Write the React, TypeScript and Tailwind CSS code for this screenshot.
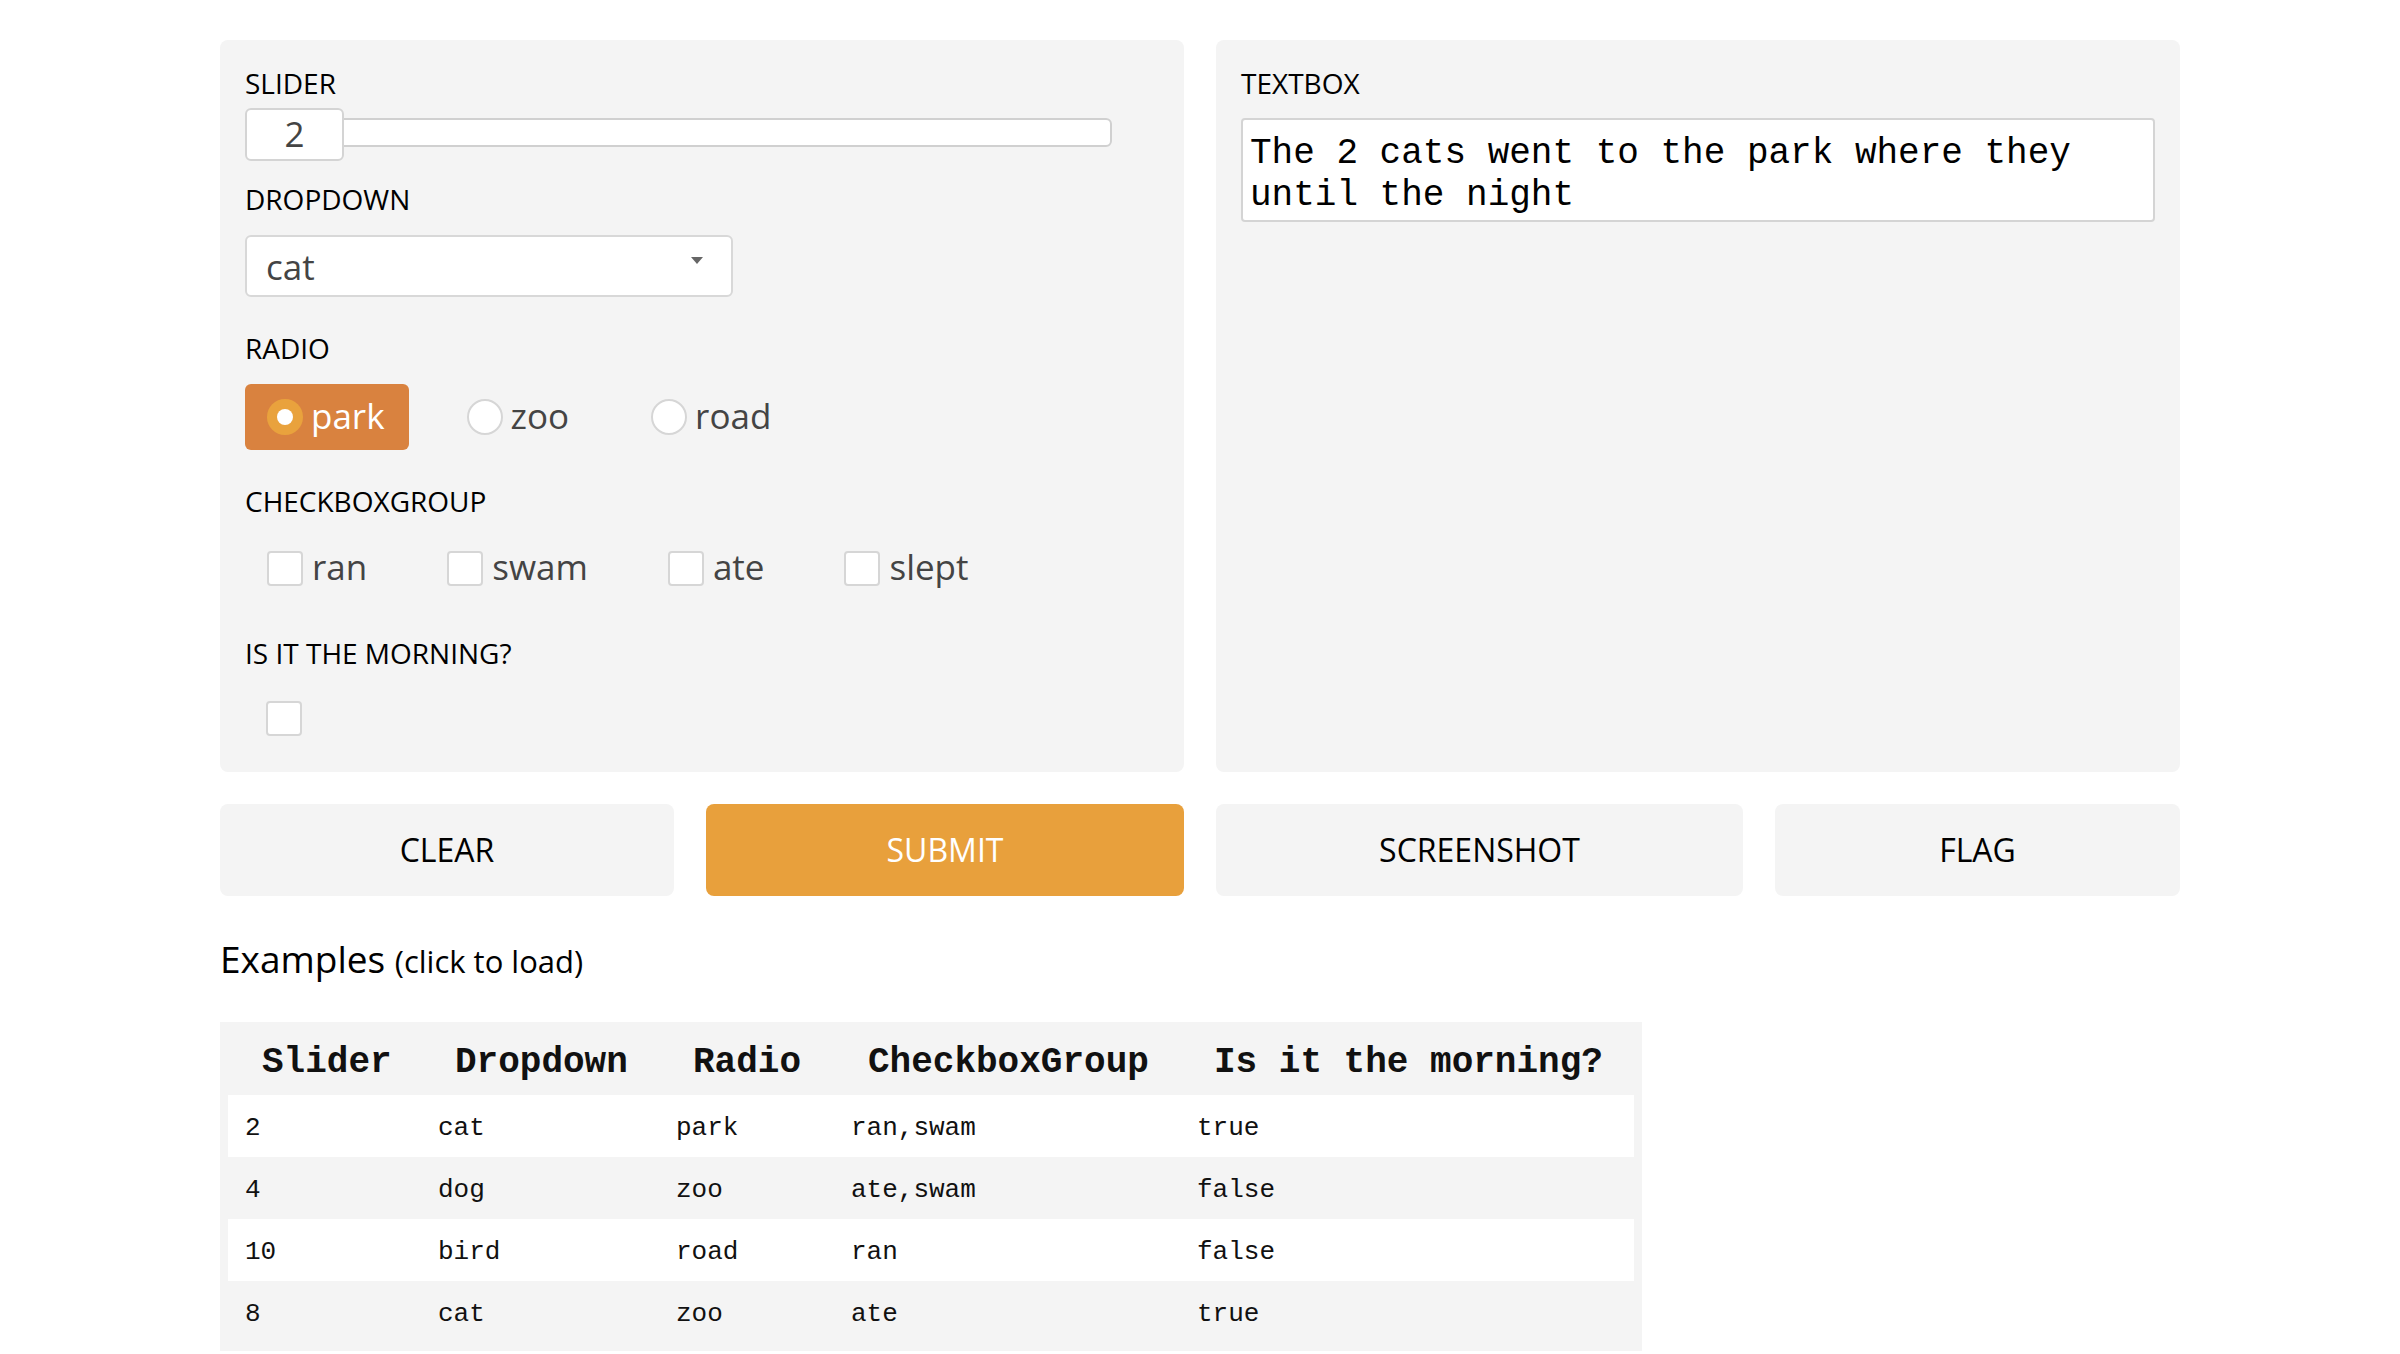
import React, { useState } from 'react';

const radioOptions = ['park', 'zoo', 'road'];
const checkOptions = ['ran', 'swam', 'ate', 'slept'];

const examples = [
  ['2', 'cat', 'park', 'ran,swam', 'true'],
  ['4', 'dog', 'zoo', 'ate,swam', 'false'],
  ['10', 'bird', 'road', 'ran', 'false'],
  ['8', 'cat', 'zoo', 'ate', 'true']
];

function Label({ children, className = '' }: { children: React.ReactNode; className?: string }) {
  return (
    <div className={`text-[28px] leading-[36px] text-black ${className}`}>{children}</div>
  );
}

function Box({ checked = false }: { checked?: boolean }) {
  return (
    <span
      className={`w-[36px] h-[35px] shrink-0 rounded-[4px] border-2 ${checked ? 'bg-[#e8a13d] border-[#e8a13d]' : 'bg-white border-[#d6d6d6]'}`}>
    </span>
  );
}

export default function App() {
  const [radio, setRadio] = useState('park');
  const [checks, setChecks] = useState<string[]>([]);
  const [morning, setMorning] = useState(false);

  const toggle = (v: string) =>
    setChecks(checks.includes(v) ? checks.filter((c) => c !== v) : [...checks, v]);

  return (
    <div className="min-h-screen bg-white font-['Open_Sans',sans-serif] px-[220px] pt-[40px]">
      <div className="flex gap-[32px]">
        {/* inputs */}
        <div className="flex-1 bg-[#f4f4f4] rounded-[8px] px-[25px] pt-[25px] pb-[36px]">
          <Label>SLIDER</Label>
          <div className="mt-[7px] flex items-start w-[867px]">
            <div className="w-[99px] h-[53px] shrink-0 bg-white border-2 border-[#d4d4d4] rounded-[6px] flex items-center justify-center text-[35px] text-[#444] relative z-10">
              2
            </div>
            <div className="flex-1 -ml-[2px] mt-[10px] h-[29px] bg-white border-2 border-[#d0d0d0] rounded-r-[6px]"></div>
          </div>

          <Label className="mt-[20px]">DROPDOWN</Label>
          <div className="mt-[18px] w-[488px] h-[62px] bg-white border-2 border-[#d8d8d8] rounded-[6px] flex items-center justify-between pl-[19px] pr-[27px]">
            <span className="text-[35px] text-[#444] leading-none">cat</span>
            <svg width="14" height="8" viewBox="0 0 14 8" className="-mt-[10px]">
              <path d="M1 0 L13 0 L7 7 Z" fill="#666" />
            </svg>
          </div>

          <Label className="mt-[33px]">RADIO</Label>
          <div className="mt-[18px] flex gap-[36px]">
            {radioOptions.map((o) => {
              const on = radio === o;
              return (
                <button
                  key={o}
                  onClick={() => setRadio(o)}
                  className={`h-[66px] pl-[22px] pr-[24px] rounded-[6px] flex items-center gap-[8px] ${on ? 'bg-[#d9823f]' : ''}`}>
                  {on ?
                  <span className="w-[36px] h-[36px] rounded-full bg-[#e9a23d] flex items-center justify-center">
                      <span className="w-[16px] h-[16px] rounded-full bg-white"></span>
                    </span> :
                  <span className="w-[36px] h-[36px] rounded-full bg-white border-2 border-[#d6d6d6]"></span>
                  }
                  <span className={`text-[35px] leading-none pb-[4px] ${on ? 'text-white' : 'text-[#444]'}`}>{o}</span>
                </button>);
            })}
          </div>

          <Label className="mt-[33px]">CHECKBOXGROUP</Label>
          <div className="mt-[16px] flex gap-[36px]">
            {checkOptions.map((o) =>
            <button
              key={o}
              onClick={() => toggle(o)}
              className="h-[66px] pl-[22px] pr-[22px] rounded-[6px] flex items-center gap-[9px]">
                <Box checked={checks.includes(o)} />
                <span className="text-[35px] leading-none pb-[4px] text-[#444]">{o}</span>
              </button>
            )}
          </div>

          <Label className="mt-[34px]">IS IT THE MORNING?</Label>
          <button onClick={() => setMorning(!morning)} className="mt-[30px] ml-[21px] flex">
            <Box checked={morning} />
          </button>
        </div>

        {/* output */}
        <div className="flex-1 bg-[#f4f4f4] rounded-[8px] px-[25px] pt-[25px]">
          <Label>TEXTBOX</Label>
          <div className="mt-[17px] h-[104px] bg-white border-2 border-[#d4d4d4] rounded-[4px] px-[7px] pt-[13px] pb-[5px] font-['Liberation_Mono',monospace] text-[36px] leading-[42px] text-black">
            The 2 cats went to the park where they until the night
          </div>
        </div>
      </div>

      <div className="mt-[32px] flex gap-[32px]">
        <div className="flex-1 flex gap-[32px]">
          <button className="flex-[454] h-[92px] rounded-[8px] bg-[#f4f4f4] text-[32px] text-black">CLEAR</button>
          <button className="flex-[478] h-[92px] rounded-[8px] bg-[#e8a03c] text-[32px] text-white">SUBMIT</button>
        </div>
        <div className="flex-1 flex gap-[32px]">
          <button className="flex-[527] h-[92px] rounded-[8px] bg-[#f4f4f4] text-[32px] text-black">SCREENSHOT</button>
          <button className="flex-[405] h-[92px] rounded-[8px] bg-[#f4f4f4] text-[32px] text-black">FLAG</button>
        </div>
      </div>

      <h2 className="mt-[39px] text-[37px] leading-[48px] text-black">
        Examples <span className="text-[31px]">(click to load)</span>
      </h2>

      <div className="mt-[37px] w-[1422px] bg-[#f4f4f4] p-[8px]">
        <table className="w-full table-fixed border-collapse font-['Liberation_Mono',monospace]">
          <colgroup>
            <col className="w-[193px]" />
            <col className="w-[238px]" />
            <col className="w-[175px]" />
            <col className="w-[346px]" />
            <col />
          </colgroup>
          <thead>
            <tr>
              {['Slider', 'Dropdown', 'Radio', 'CheckboxGroup', 'Is it the morning?'].map((h) =>
              <th key={h} className="text-left font-bold text-[36px] leading-[41px] py-[12px] px-[34px] whitespace-nowrap text-[#111]">
                  {h}
                </th>
              )}
            </tr>
          </thead>
          <tbody>
            {examples.map((row, i) =>
            <tr key={i} className={i % 2 === 0 ? 'bg-white' : 'bg-[#f4f4f4]'}>
                {row.map((cell, j) =>
              <td key={j} className="h-[62px] px-[17px] pt-[4px] text-[26px] leading-[30px] text-[#111] whitespace-nowrap">
                    {cell}
                  </td>
              )}
              </tr>
            )}
          </tbody>
        </table>
      </div>
    </div>);

}
